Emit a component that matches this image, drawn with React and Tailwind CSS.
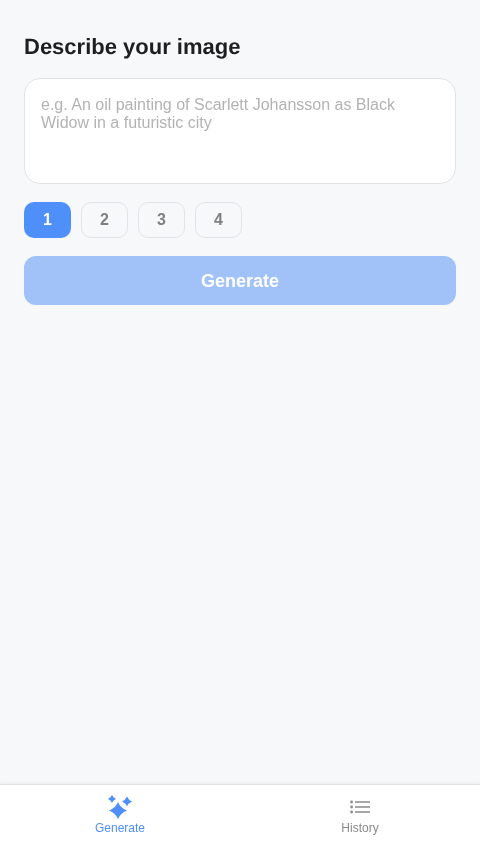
import { useState } from 'react'

const counts = [1, 2, 3, 4]

function SparkIcon() {
  return (
    <svg width="26" height="26" viewBox="0 0 26 26" fill="#4f8ffa" aria-hidden>
      <path d="M11 8 Q13.4 14 20 16.5 Q13.4 19 11 25 Q8.6 19 2 16.5 Q8.6 14 11 8 Z" />
      <path d="M5 1 Q6.2 3.8 9 5 Q6.2 6.2 5 9 Q3.8 6.2 1 5 Q3.8 3.8 5 1 Z" />
      <path d="M20 2.5 Q21.5 6 25 7.5 Q21.5 9 20 12.5 Q18.5 9 15 7.5 Q18.5 6 20 2.5 Z" />
    </svg>
  )
}

function ListIcon() {
  return (
    <svg width="24" height="24" viewBox="0 0 24 24" fill="none" stroke="#8a8a8a" strokeWidth="1.5" aria-hidden>
      <path d="M7 7h15M7 12h15M7 17h15" />
      <circle cx="3.6" cy="7" r="1.4" fill="#8a8a8a" stroke="none" />
      <circle cx="3.6" cy="12" r="1.4" fill="#8a8a8a" stroke="none" />
      <circle cx="3.6" cy="17" r="1.4" fill="#8a8a8a" stroke="none" />
    </svg>
  )
}

export default function App() {
  const [count, setCount] = useState(1)

  return (
    <div className="flex h-[844px] flex-col bg-[#f7f8fa] font-['Liberation_Sans',Arial,sans-serif] antialiased will-change-transform [text-rendering:geometricPrecision]">
      <main className="flex flex-1 flex-col px-6 pt-[32px]">
        <h1 className="text-[22px] font-bold leading-[30px] text-[#1f1f1f]">Describe your image</h1>

        <textarea
          className="mt-4 h-[106px] w-full resize-none rounded-2xl border border-[#e2e3e6] bg-white px-4 py-[17px] text-base leading-[18px] text-[#1f1f1f] outline-none placeholder:text-[#b3b3b3]"
          placeholder="e.g. An oil painting of Scarlett Johansson as Black Widow in a futuristic city"
        />

        <div className="mt-[18px] flex gap-[10px]">
          {counts.map((n) => (
            <button
              key={n}
              type="button"
              onClick={() => setCount(n)}
              className={[
                'h-9 w-[47px] rounded-[10px] text-base font-bold',
                n === count
                  ? 'bg-[#4f8ffa] text-white'
                  : 'border border-[#e2e3e6] text-[#808080]',
              ].join(' ')}
            >
              {n}
            </button>
          ))}
        </div>

        <button
          type="button"
          className="mt-[18px] h-[49px] w-full rounded-xl bg-[#a1c2f9] text-lg font-bold text-white"
        >
          Generate
        </button>
      </main>

      <nav className="flex h-[60px] shrink-0 border-t border-[#e2e3e6] bg-white shadow-[0_-1px_3px_rgba(0,0,0,0.06)]">
        <button type="button" className="flex flex-1 flex-col items-center pt-[9px] text-xs leading-[14px] text-[#4f8ffa]">
          <SparkIcon />
          <span className="mt-px">Generate</span>
        </button>
        <button type="button" className="flex flex-1 flex-col items-center pt-[10px] text-xs leading-[14px] text-[#8a8a8a]">
          <ListIcon />
          <span className="mt-[2px]">History</span>
        </button>
      </nav>
    </div>
  )
}
